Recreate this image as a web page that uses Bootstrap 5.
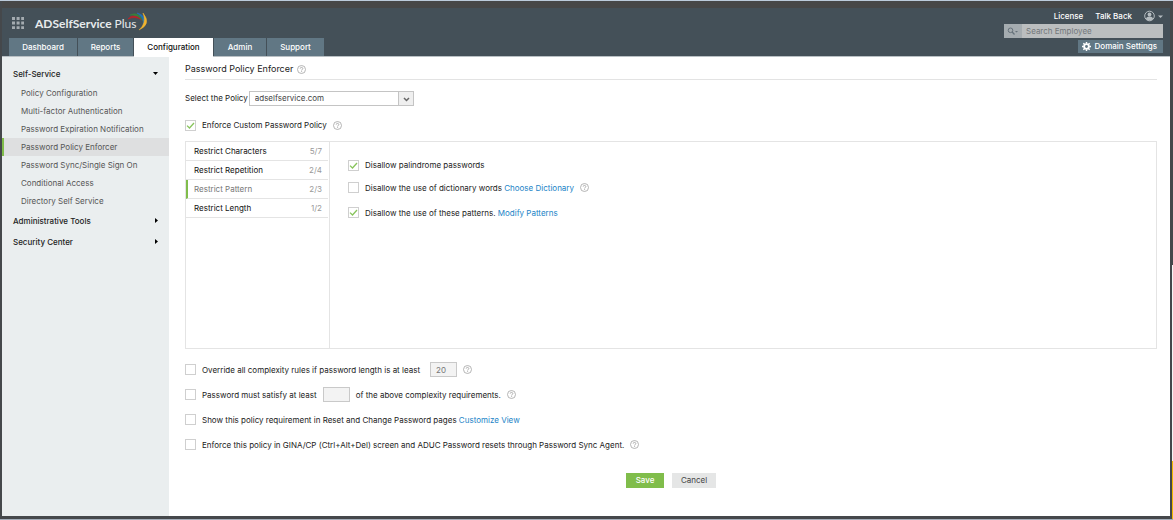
<!DOCTYPE html>
<html lang="en">
<head>
<meta charset="utf-8">
<meta name="viewport" content="width=device-width, initial-scale=1">
<title>ADSelfService Plus - Password Policy Enforcer</title>
<link href="https://cdn.jsdelivr.net/npm/bootstrap@5.3.0/dist/css/bootstrap.min.css" rel="stylesheet">
<script src="https://cdn.jsdelivr.net/npm/bootstrap@5.3.0/dist/js/bootstrap.bundle.min.js" defer></script>
<style>
  :root { --slate: #445058; --tab: #617784; --line: #e4e4e4; --green: #80bd4b; --link: #1b84c7; }
  body { font: 8px/18px Inter, "Noto Sans", sans-serif; color: #222; background: #45484b; }
  a { color: var(--link); text-decoration: none; }
  .page-frame { min-height: 100vh; padding: 0 3px 3px 2px; border-top: 1px solid #bccbdb; border-bottom: 1px solid #a3adb9; }
  .top-strip { height: 7px; background: #474747; }
  .edge-strip { right: 0; top: 51%; bottom: 0; width: 1px; background: linear-gradient(#f4f4f4 77%, #f2b900 77%); }
  .app-head { background: var(--slate); height: 49px; padding: 0 7px; border-bottom: 1px solid #b9c0c4; }
  .brand-row { height: 30px; padding: 0 3px; }
  .brand-name { font: 700 12px/18px Lato, sans-serif; color: #e8ebed; padding: 2px 0 0 11px; }
  .brand-name span { font-weight: 400; }
  .brand-arcs { right: -12px; top: -1px; }
  .main-tabs .nav-link { background: var(--tab); color: #fff; font-weight: 500; padding: 0; height: 18px; text-align: center; border-radius: 0; margin-right: 1px; }
  .main-tabs .nav-link.active { background: #fff; color: #111; height: 19px; }
  .w-dash { width: 68px; } .w-rep { width: 55px; } .w-conf { width: 79px; } .w-adm { width: 52px; } .w-sup { width: 57px; }
  .head-links { height: 16px; }
  .head-links a { color: #fff; font-weight: 500; line-height: 14px; }
  .user-menu { border: 0; padding: 0; background: none; line-height: 0; }
  .search-box { width: 159px; height: 14px; background: #bbbebf; }
  .search-box button { width: 18px; background: #a5acb0; border: 0; padding: 0; line-height: 0; }
  .search-box input { border: 0; background: none; color: #555; padding: 0 4px; line-height: 14px; min-width: 0; outline: 0; }
  .search-box input::placeholder { color: #73787b; opacity: 1; }
  .domain-btn { background: var(--tab); color: #fff; font-size: 8px; font-weight: 500; line-height: 13px; height: 13px; padding: 0 6px 0 4px; border-radius: 0; border: 0; margin-top: 2px; }
  .side { width: 167px; background: #eaeeef; padding-top: 6px; }
  .side-head { border: 0; background: none; color: #222; font-weight: 500; height: 21px; line-height: 20px; padding: 0 11px; width: 100%; }
  .side .nav-link { color: #555; height: 18px; line-height: 18px; padding: 0 0 0 19px; border-radius: 0; }
  .side .nav-link.active { background: #dedfe0; border-left: 2px solid var(--green); padding-left: 17px; }
  .content-area { padding: 0 13px 24px 16px; }
  .page-title { font-size: 9px; height: 23px; padding-top: 2px; margin: 0; border-bottom: 1px solid #e3e3e3; font-weight: 400; }
  .policy-row { height: 36px; gap: 1px; }
  .policy-pick { width: 165px; height: 15px; padding: 0 5px; font: inherit; line-height: 13px; color: #444; border: 1px solid #c4c4c4; border-radius: 0; appearance: none;
    background: linear-gradient(#c4c4c4, #c4c4c4) right 14px top / 1px 100% no-repeat, linear-gradient(#efefef, #efefef) right / 14px 100% no-repeat, #fff; }
  .pick-arrow { right: 4px; top: 6px; pointer-events: none; }
  .tick { appearance: none; width: 11px; height: 11px; margin: 0; border: 1px solid #cfcfcf; background: #fff center / 9px 9px no-repeat; flex: none; }
  .tick:checked { background-image: url("data:image/svg+xml,%3Csvg xmlns='http://www.w3.org/2000/svg' viewBox='0 0 9 9'%3E%3Cpath d='M1 4.6 3.5 7 8 2' fill='none' stroke='%2388c45c' stroke-width='1.3'/%3E%3C/svg%3E"); }
  .help { width: 9px; height: 9px; flex: none; }
  .rule-panel { border: 1px solid var(--line); height: 208px; margin: 7px 0 8px; }
  .rule-tabs { width: 144px; border-right: 1px solid var(--line); padding-right: 1px; }
  .rule-tabs .nav-link { height: 19px; line-height: 18px; padding: 0 6px 0 8px; border-radius: 0; border-bottom: 1px solid var(--line); color: #111; }
  .rule-tabs .nav-link span + span { color: #999; }
  .rule-tabs .nav-link.active { color: #777; border-left: 2px solid var(--green); padding-left: 6px; }
  .rule-body { padding: 14px 18px; gap: 2px; }
  .opt { gap: 6px; }
  .opt.tall { height: 25px; }
  .rule-body .opt.tall { height: 23px; }
  .num-box { width: 27px; height: 15px; border: 1px solid #c9c9c9; background: #f3f3f3; color: #777; padding: 0 5px; border-radius: 0; }
  .act { font-size: 8px; line-height: 15px; height: 15px; padding: 0; border: 0; border-radius: 0; }
  .act-save { width: 38px; background: var(--green); color: #fff; font-weight: 500; }
  .act-cancel { width: 44px; background: #e5e6e6; color: #444; }
</style>
</head>
<body>
<svg class="d-none">
  <symbol id="help" viewBox="0 0 9 9"><circle cx="4.5" cy="4.5" r="4" fill="none" stroke="#a3a3a3" stroke-width=".8"/><path d="M3.2 3.6c0-1.7 2.6-1.6 2.6 0 0 .9-1.2.9-1.2 1.9M4.6 6.2v.9" fill="none" stroke="#999" stroke-width=".8"/></symbol>
</svg>
<div class="page-frame d-flex flex-column position-relative">
  <div class="top-strip"></div>
  <div class="edge-strip position-absolute"></div>
  <header class="app-head d-flex justify-content-between">
    <div>
      <div class="brand-row d-flex align-items-center">
        <svg width="12" height="12" viewBox="0 0 12 12" fill="#a4abb0"><path d="M0 0h3v3H0zM4.600 0h3v3h-3zM9.200 0h3v3h-3zM0 4.600h3v3H0zM4.600 4.600h3v3h-3zM9.200 4.600h3v3h-3zM0 9.200h3v3H0zM4.600 9.200h3v3h-3zM9.200 9.200h3v3h-3z"/></svg>
        <div class="brand-name position-relative">ADSelfService <span>Plus</span>
          <svg class="brand-arcs position-absolute" width="21" height="19" viewBox="0 0 21 19"><path d="M1 7Q7 0 15 8 8 3.500 1 7z" fill="#b3252c" stroke="#b3252c" stroke-width=".8"/><path d="M3 3Q12-1 16 9 11 2 3 3z" fill="#37813d" stroke="#37813d" stroke-width=".6"/><path d="M10 1Q20 3 16.500 13 17 5 10 1z" fill="#2470b8" stroke="#2470b8" stroke-width=".6"/><path d="M16 1Q25 12 12 18 20 11 16 1z" fill="#f0b32f" stroke="#f0b32f" stroke-width=".5"/></svg>
        </div>
      </div>
      <nav class="nav main-tabs flex-nowrap">
        <a class="nav-link w-dash" href="#">Dashboard</a>
        <a class="nav-link w-rep" href="#">Reports</a>
        <a class="nav-link w-conf active" aria-current="page" href="#">Configuration</a>
        <a class="nav-link w-adm" href="#">Admin</a>
        <a class="nav-link w-sup" href="#">Support</a>
      </nav>
    </div>
    <div class="d-flex flex-column align-items-end">
      <div class="head-links d-flex align-items-center">
        <a href="#">License</a><a class="ms-2 ps-1" href="#">Talk Back</a>
        <button class="user-menu ms-2 ps-1" type="button" aria-label="Account">
          <svg width="19" height="12" viewBox="0 0 19 12"><circle cx="5.500" cy="6" r="4.800" fill="none" stroke="#b5bcc0"/><circle cx="5.500" cy="4.500" r="1.900" fill="#b5bcc0"/><path d="M2 9.200q0-2.700 3.500-2.700t3.500 2.700q-3.500 2.700-7 0z" fill="#b5bcc0"/><path d="M14 5.500h5L16.500 8z" fill="#b5bcc0"/></svg>
        </button>
      </div>
      <div class="search-box d-flex">
        <button type="button" aria-label="Search options"><svg width="12" height="8" viewBox="0 0 12 8"><circle cx="3.500" cy="3.300" r="2.300" fill="none" stroke="#65717a"/><path d="m5.200 5 2.300 2.500" stroke="#65717a" stroke-width="1.200"/><path d="M8 4h3L9.500 5.600z" fill="#65717a"/></svg></button>
        <input class="flex-fill" type="text" placeholder="Search Employee" aria-label="Search Employee">
      </div>
      <button class="btn domain-btn d-flex align-items-center gap-1" type="button"><svg width="9" height="9" viewBox="0 0 10 10"><circle cx="5" cy="5" r="2.600" fill="none" stroke="#fff" stroke-width="2"/><path d="M5 0v2M5 8v2M0 5h2M8 5h2M1.500 1.500l1.400 1.400M7.100 7.100l1.400 1.400M8.500 1.500 7.100 2.900M2.900 7.100 1.500 8.500" stroke="#fff" stroke-width="1.600"/></svg>Domain Settings</button>
    </div>
  </header>
  <div class="d-flex flex-grow-1 bg-white">
    <aside class="side flex-shrink-0">
      <button class="side-head d-flex justify-content-between align-items-center" type="button">Self-Service<svg width="5" height="3"><path d="M0 0h5L2.500 3z"/></svg></button>
      <nav class="nav flex-column">
        <a class="nav-link" href="#">Policy Configuration</a>
        <a class="nav-link" href="#">Multi-factor Authentication</a>
        <a class="nav-link" href="#">Password Expiration Notification</a>
        <a class="nav-link active" aria-current="page" href="#">Password Policy Enforcer</a>
        <a class="nav-link" href="#">Password Sync/Single Sign On</a>
        <a class="nav-link" href="#">Conditional Access</a>
        <a class="nav-link" href="#">Directory Self Service</a>
      </nav>
      <button class="side-head d-flex justify-content-between align-items-center" type="button">Administrative Tools<svg width="3" height="5"><path d="M0 0v5l3-2.500z"/></svg></button>
      <button class="side-head d-flex justify-content-between align-items-center" type="button">Security Center<svg width="3" height="5"><path d="M0 0v5l3-2.500z"/></svg></button>
    </aside>
    <main class="content-area flex-grow-1">
      <h1 class="page-title d-flex align-items-center gap-1">Password Policy Enforcer <svg class="help"><use href="#help"/></svg></h1>
      <div class="policy-row d-flex align-items-center">
        <label for="policy">Select the Policy</label>
        <div class="position-relative d-flex">
          <select class="policy-pick" id="policy"><option>adselfservice.com</option></select>
          <svg class="pick-arrow position-absolute" width="7" height="5"><path d="M1 1l2.500 2.500L6 1" fill="none" stroke="#666" stroke-width="1.500"/></svg>
        </div>
      </div>
      <div class="opt d-flex align-items-center"><input class="tick" type="checkbox" id="enforce" checked><label for="enforce">Enforce Custom Password Policy</label><svg class="help"><use href="#help"/></svg></div>
      <section class="rule-panel d-flex">
        <nav class="rule-tabs nav flex-column flex-nowrap flex-shrink-0">
          <a class="nav-link d-flex justify-content-between" href="#"><span>Restrict Characters</span><span>5/7</span></a>
          <a class="nav-link d-flex justify-content-between" href="#"><span>Restrict Repetition</span><span>2/4</span></a>
          <a class="nav-link d-flex justify-content-between active" href="#"><span>Restrict Pattern</span><span>2/3</span></a>
          <a class="nav-link d-flex justify-content-between" href="#"><span>Restrict Length</span><span>1/2</span></a>
        </nav>
        <div class="rule-body d-flex flex-column">
          <div class="opt d-flex align-items-center"><input class="tick" type="checkbox" id="pal" checked><label for="pal">Disallow palindrome passwords</label></div>
          <div class="opt tall d-flex align-items-center"><input class="tick" type="checkbox" id="dict"><span><label for="dict">Disallow the use of dictionary words</label> <a href="#">Choose Dictionary</a></span><svg class="help"><use href="#help"/></svg></div>
          <div class="opt tall d-flex align-items-center"><input class="tick" type="checkbox" id="pat" checked><span><label for="pat">Disallow the use of these patterns.</label> <a href="#">Modify Patterns</a></span></div>
        </div>
      </section>
      <div class="opt tall d-flex align-items-center"><input class="tick" type="checkbox" id="over"><label for="over">Override all complexity rules if password length is at least</label><input class="num-box ms-1" type="text" value="20" aria-label="Minimum length"><svg class="help"><use href="#help"/></svg></div>
      <div class="opt tall d-flex align-items-center"><input class="tick" type="checkbox" id="sat"><label for="sat">Password must satisfy at least</label><input class="num-box" type="text" aria-label="Number of requirements"><span>of the above complexity requirements.</span><svg class="help"><use href="#help"/></svg></div>
      <div class="opt tall d-flex align-items-center"><input class="tick" type="checkbox" id="show"><span><label for="show">Show this policy requirement in Reset and Change Password pages</label> <a href="#">Customize View</a></span></div>
      <div class="opt tall d-flex align-items-center"><input class="tick" type="checkbox" id="gina"><label for="gina">Enforce this policy in GINA/CP (Ctrl+Alt+Del) screen and ADUC Password resets through Password Sync Agent.</label><svg class="help"><use href="#help"/></svg></div>
      <div class="d-flex justify-content-center mt-3"><button class="btn act act-save" type="button">Save</button><button class="btn act act-cancel ms-2" type="button">Cancel</button></div>
    </main>
  </div>
</div>
</body>
</html>
